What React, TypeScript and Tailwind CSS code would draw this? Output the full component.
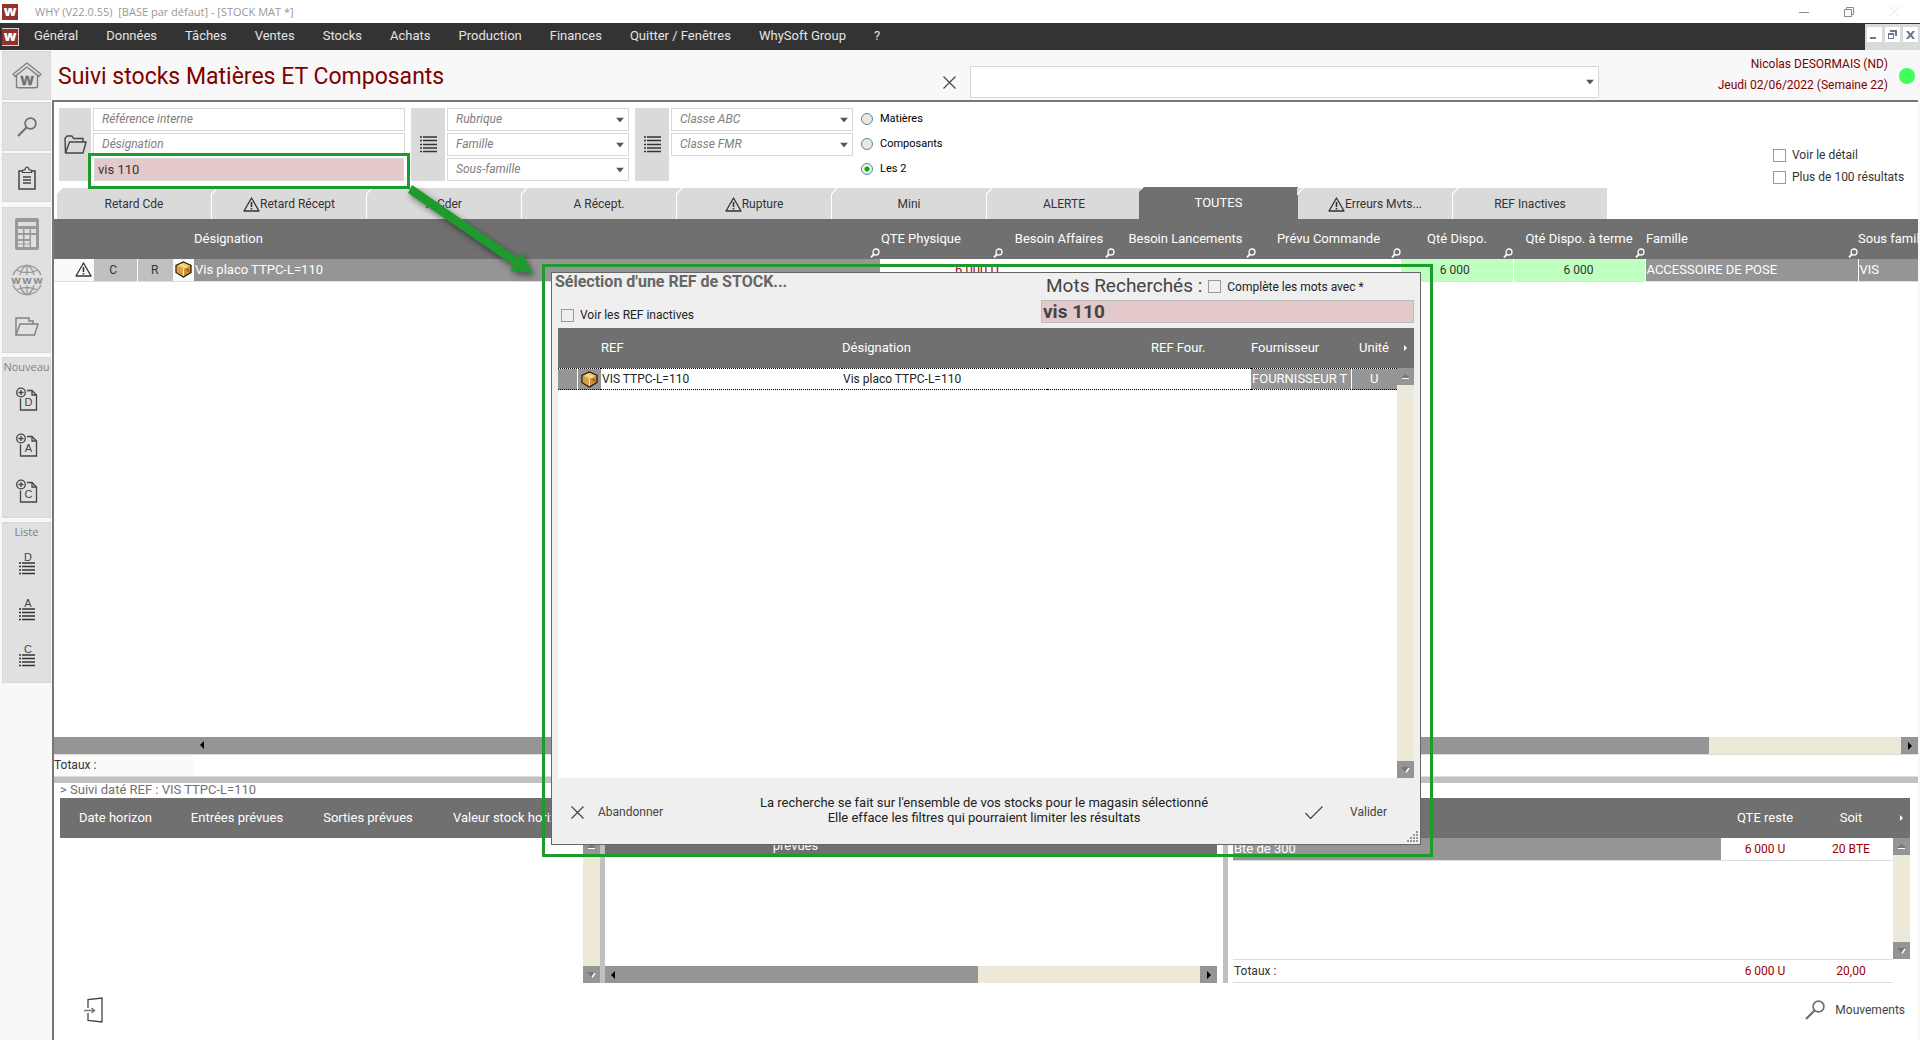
import type { ReactNode } from "react";

const menuItems = [
  "Général",
  "Données",
  "Tâches",
  "Ventes",
  "Stocks",
  "Achats",
  "Production",
  "Finances",
  "Quitter / Fenêtres",
  "WhySoft Group",
  "?"
];

const tabs = [
  { label: "Retard Cde" },
  { label: "Retard Récept", warn: true },
  { label: "A Cder" },
  { label: "A Récept." },
  { label: "Rupture", warn: true },
  { label: "Mini" },
  { label: "ALERTE" },
  { label: "TOUTES", active: true },
  { label: "Erreurs Mvts...", warn: true },
  { label: "REF Inactives" }
];

const stockColumns = [
  { label: "QTE Physique", align: "text-left" },
  { label: "Besoin Affaires", align: "text-center" },
  { label: "Besoin Lancements", align: "text-center" },
  { label: "Prévu Commande", align: "text-center" },
  { label: "Qté Dispo.", align: "text-center" },
  { label: "Qté Dispo. à terme", align: "text-center" },
  { label: "Famille", align: "text-left" }
];

function Logo() {
  return (
    <span className="flex size-4 shrink-0 items-center justify-center bg-[#96302f] pb-[2px] font-['Open_Sans',sans-serif] text-sm leading-none font-extrabold text-white">
      w
    </span>
  );
}

function WarningIcon() {
  return (
    <svg width="17" height="15" viewBox="0 0 17 15" fill="none" stroke="#333" className="shrink-0">
      <path d="M8.5 1 1 14h15z" strokeWidth="1.3" strokeLinejoin="round" />
      <path d="M8.5 5v5M8.5 11v1.6" strokeWidth="1.6" />
    </svg>
  );
}

function BoxIcon() {
  return (
    <svg width="17" height="17" viewBox="0 0 17 17" className="shrink-0">
      <path d="M8.5 1 16 4.5v7L8.5 16 1 11.5v-7z" fill="#c8923a" stroke="#1a1208" strokeWidth="1.2" />
      <path d="M8.5 1.7 15.2 4.8 8.5 8 1.8 4.8z" fill="#f3cc5c" />
      <path d="M8.5 8v7.2L1.8 11.2V4.8z" fill="#d5a048" />
      <path d="M5 3.2 11.8 6.4M8.5 8v7" stroke="#fbe9a5" />
      <path d="m11 8 2.5 1.5M13.4 8v3" stroke="#c8402a" strokeWidth="1.3" />
    </svg>
  );
}

function SearchIcon({ size = 20 }: { size?: number }) {
  return (
    <svg width={size} height={size} viewBox="0 0 20 20" fill="none" stroke="#707070">
      <circle cx="13.5" cy="6.5" r="5.4" strokeWidth="1.7" />
      <path d="M9.5 10.5 1 19" strokeWidth="2.2" />
    </svg>
  );
}

function ColumnSearchIcon() {
  return (
    <svg width="10" height="10" viewBox="0 0 10 10" fill="none" stroke="#fff" className="absolute right-0 bottom-px">
      <circle cx="6" cy="4" r="3" strokeWidth="1.3" />
      <path d="M4 6.2 1 9.4" strokeWidth="1.8" />
    </svg>
  );
}

function CrossIcon() {
  return (
    <svg width="13" height="13" viewBox="0 0 13 13" fill="none" stroke="#444" strokeWidth="1.2">
      <path d="m.5.5 12 12M12.5.5l-12 12" />
    </svg>
  );
}

function ListIcon() {
  return (
    <svg width="17" height="17" viewBox="0 0 17 17" stroke="#333" strokeWidth="1.3" fill="none">
      <path d="M0 1h2M0 4.500h2M0 8.500h2M0 12h2M0 15.500h2M3 1h14M3 4.500h14M3 8.500h14M3 12h14M3 15.500h14" />
    </svg>
  );
}

function HomeIcon() {
  return (
    <svg width="30" height="27" viewBox="0 0 30 27" fill="none" stroke="#808080" strokeWidth="1.4">
      <path d="M15 1 1 12.2l2 2.2L15 5l12 9.4 2-2.2z" strokeLinejoin="round" />
      <path d="M4.500 13.500V24q0 1.800 1.800 1.800h17.400q1.800 0 1.800-1.800V13.500" />
      <text x="15" y="22.500" textAnchor="middle" fill="#707070" stroke="#707070" strokeWidth=".3" fontSize="16" fontWeight="700" fontFamily="Open Sans">
        w
      </text>
    </svg>
  );
}

function ClipboardIcon() {
  return (
    <svg width="18" height="24" viewBox="0 0 18 24" fill="none" stroke="#444" strokeWidth="1.5">
      <path d="M4.500 5H1v18h16V5h-3.500" />
      <path d="M4.500 6.500V4.200L7 3.800q.4-2.800 2-2.800t2 2.800l2.500.4v2.300z" strokeWidth="1.200" />
      <path d="M5 11h8M5 14h8M5 17h8" strokeWidth="1.300" />
    </svg>
  );
}

function CalculatorIcon() {
  return (
    <svg width="24" height="32" viewBox="0 0 24 32">
      <rect width="24" height="32" rx="2" fill="#999" />
      <path
        d="M3 4h18v4H3zM3 11h5v4H3zM9.500 11h5v4h-5zM16 11h5v4h-5zM3 17h5v4H3zM9.500 17h5v4h-5zM16 17h5v12h-5zM3 23h5v6H3zM9.500 23h5v6h-5z"
        fill="#e0e0e0"
      />
      <path d="M3 26h11.500" stroke="#999" />
    </svg>
  );
}

function GlobeIcon() {
  return (
    <svg width="32" height="32" viewBox="0 0 32 32" fill="none" stroke="#999" strokeWidth="1.300">
      <path d="M2 11a15 15 0 0 1 28 0M2 21a15 15 0 0 0 28 0M16 1v10M16 21v10M9 11q1.500-7 7-10 5.500 3 7 10M9 21q1.500 7 7 10 5.500-3 7-10M5 6q11 5 22 0M5 26q11-5 22 0" />
      <g fill="#8c8c8c" stroke="none" fontSize="11" fontWeight="700" fontFamily="Open Sans" textAnchor="middle">
        <text x="5" y="19.500">w</text>
        <text x="16" y="19.500">w</text>
        <text x="27" y="19.500">w</text>
      </g>
    </svg>
  );
}

function SideFolderIcon() {
  return (
    <svg width="24" height="19" viewBox="0 0 24 19" fill="none" stroke="#808080" strokeWidth="1.400">
      <path d="M1 18V1h13v3h4v3" />
      <path d="M1 18 5 7h18l-3.500 11z" />
    </svg>
  );
}

function FolderIcon() {
  return (
    <svg width="23" height="19" viewBox="0 0 23 19" fill="none" stroke="#444" strokeWidth="1.400" strokeLinejoin="round">
      <path d="M1.500 18 1 3.500 3 1h5l1.500 2.500H19V7" />
      <path d="M1.500 18 5.500 7H22l-3 11z" />
    </svg>
  );
}

function NewDocIcon({ letter }: { letter: string }) {
  return (
    <svg width="22" height="24" viewBox="0 0 22 24" fill="none" stroke="#444" strokeWidth="1.300">
      <circle cx="5" cy="5.500" r="4.300" />
      <path d="M5 3v5M2.500 5.500h5" />
      <path d="M11 3.500h5l4.500 4.500v15h-16V11.500" />
      <path d="M16 3.500V8h4.500" />
      <text x="12.500" y="19" textAnchor="middle" fill="#444" stroke="none" fontSize="11" fontFamily="Liberation Sans">
        {letter}
      </text>
    </svg>
  );
}

function ListDocIcon({ letter }: { letter: string }) {
  return (
    <svg width="16" height="30" viewBox="0 -4 16 30" fill="none" stroke="#333" strokeWidth="1.300">
      <text x="9" y="8" textAnchor="middle" fill="#444" stroke="none" fontSize="11" fontFamily="Liberation Sans">
        {letter}
      </text>
      <path d="M0 10h2M0 13.500h2M0 17h2M0 20.500h2M3 10h13M3 13.500h13M3 17h13M3 20.500h13" />
    </svg>
  );
}

function SideButton({ label, children }: { label: string; children: ReactNode }) {
  return (
    <button type="button" aria-label={label} className="flex h-[46px] w-full items-center justify-center">
      {children}
    </button>
  );
}

function SideTile({ label, children }: { label: string; children: ReactNode }) {
  return (
    <button
      type="button"
      aria-label={label}
      className="flex h-[49px] w-full items-center justify-center border border-[#d8d8d8] bg-[#e0e0e0]"
    >
      {children}
    </button>
  );
}

function Sidebar() {
  return (
    <aside className="flex w-[52px] shrink-0 flex-col bg-[#f8f8f8] pt-px pr-px pl-[2px]">
      <div className="flex flex-col gap-[2px]">
        <SideTile label="Accueil"><HomeIcon /></SideTile>
        <SideTile label="Rechercher"><SearchIcon /></SideTile>
        <SideTile label="Presse-papiers"><ClipboardIcon /></SideTile>
      </div>
      <div className="mt-[5px] border border-[#d8d8d8] bg-[#e0e0e0] py-[3px]">
        <SideButton label="Calculatrice"><CalculatorIcon /></SideButton>
        <SideButton label="Internet"><GlobeIcon /></SideButton>
        <SideButton label="Dossier"><SideFolderIcon /></SideButton>
      </div>
      <div className="mt-1 border border-[#d8d8d8] bg-[#e0e0e0] pb-[3px]">
        <p className="text-center font-['Open_Sans',sans-serif] text-[11px] leading-[18px] text-[#808080]">Nouveau</p>
        {["D", "A", "C"].map((letter) => (
          <SideButton key={letter} label={`Nouveau ${letter}`}><NewDocIcon letter={letter} /></SideButton>
        ))}
      </div>
      <div className="mt-1 border border-[#d8d8d8] bg-[#e0e0e0] pb-[3px]">
        <p className="text-center font-['Open_Sans',sans-serif] text-[11px] leading-[18px] text-[#808080]">Liste</p>
        {["D", "A", "C"].map((letter) => (
          <SideButton key={letter} label={`Liste ${letter}`}><ListDocIcon letter={letter} /></SideButton>
        ))}
      </div>
    </aside>
  );
}

function Caret() {
  return (
    <svg width="8" height="5" viewBox="0 0 8 5" className="pointer-events-none absolute top-1/2 right-1 -translate-y-1/2">
      <path d="M0 0h8L4 5z" fill="#555" />
    </svg>
  );
}

function FilterSelect({ label }: { label: string }) {
  return (
    <div className="relative h-[23px] w-[182px] border border-[#d8d8d8] bg-white">
      <select aria-label={label} className="block h-full w-full appearance-none px-2 pb-px text-xs text-[#808080] italic">
        <option>{label}</option>
      </select>
      <Caret />
    </div>
  );
}

function Check({ label, dark }: { label: string; dark?: boolean }) {
  return (
    <label className={`flex items-center gap-[6px] text-xs ${dark ? "text-[#222]" : "text-[#333]"}`}>
      <input type="checkbox" className="size-[13px] appearance-none border border-[#999] checked:bg-[#707070]" />
      {label}
    </label>
  );
}

function ScrollUp() {
  return (
    <button type="button" aria-label="Monter" className="flex h-[17px] w-full shrink-0 items-center justify-center bg-[#959595]">
      <svg width="9" height="6" viewBox="0 0 9 6">
        <path d="M0 4 4.500 0 9 4z" fill="#777" />
        <path d="M1 4.500h7" stroke="#fff" />
      </svg>
    </button>
  );
}

function ScrollDown() {
  return (
    <button type="button" aria-label="Descendre" className="flex h-[17px] w-full shrink-0 items-center justify-center bg-[#959595]">
      <svg width="9" height="6" viewBox="0 0 9 6">
        <path d="M0 0h9L4.500 5z" fill="#777" />
        <path d="M8 1 5 5.200" stroke="#fff" strokeWidth="1.500" />
      </svg>
    </button>
  );
}

function VerticalBar() {
  return (
    <div className="flex w-[17px] shrink-0 flex-col bg-[#ece9d8]">
      <ScrollUp />
      <div className="flex-1" />
      <ScrollDown />
    </div>
  );
}

function ArrowLeft() {
  return (
    <svg width="4" height="8" viewBox="0 0 4 8">
      <path d="M4 0v8L0 4z" />
    </svg>
  );
}

function ArrowRight() {
  return (
    <svg width="4" height="8" viewBox="0 0 4 8">
      <path d="M0 0v8l4-4z" />
    </svg>
  );
}

function HeaderArrow() {
  return (
    <svg width="3" height="6" viewBox="0 0 3 6" className="absolute top-[17px] right-[7px] fill-white">
      <path d="M0 0v6l3-3z" />
    </svg>
  );
}

function TitleBar() {
  return (
    <div className="flex h-[23px] items-center bg-white pl-[2px]">
      <Logo />
      <p className="ml-[17px] flex-1 pt-px font-['Open_Sans',sans-serif] text-[11px] whitespace-pre text-[#999]">
        {"WHY (V22.0.55)  [BASE par défaut] - [STOCK MAT *]"}
      </p>
      <div className="flex items-center gap-[35px] pr-5">
        <button type="button" aria-label="Réduire">
          <svg width="10" height="10" viewBox="0 0 10 10" stroke="#888"><path d="M0 5.500h10" /></svg>
        </button>
        <button type="button" aria-label="Restaurer">
          <svg width="10" height="10" viewBox="0 0 10 10" fill="none" stroke="#888">
            <path d="M.5 2.500h7v7h-7zM2.500 2.500v-2h7v7h-2" />
          </svg>
        </button>
        <button type="button" aria-label="Fermer">
          <svg width="11" height="11" viewBox="0 0 11 11" stroke="#e4e4e4"><path d="m.5.5 10 10M10.500.5l-10 10" /></svg>
        </button>
      </div>
    </div>
  );
}

function MenuBar() {
  return (
    <nav className="flex h-[27px] items-center bg-[#333] pl-[2px]">
      <span className="border border-l-0 border-white/80"><Logo /></span>
      <div className="ml-[15px] flex flex-1 gap-7 pb-px">
        {menuItems.map((item) => (
          <button key={item} type="button" className="text-[13px] whitespace-nowrap text-[#e4e4e4]">
            {item}
          </button>
        ))}
      </div>
      <div className="mt-px flex h-[26px] items-start gap-[3px] bg-[#dadada] px-[2px] pt-[3px]">
        {[
          { label: "Réduire la fenêtre", path: "M1 8h6v2H1z" },
          { label: "Restaurer la fenêtre", path: "M3 1h7v6H8V3H3zM1 4h6v6H1zM2 6v3h4V6z" },
          { label: "Fermer la fenêtre", path: "M1 2h2.500l2 2.500 2-2.500H10L7 6l3 4H7.500l-2-2.500-2 2.500H1l3-4z" }
        ].map((item) => (
          <button key={item.label} type="button" aria-label={item.label} className="flex h-[15px] w-[15px] items-center justify-center bg-white">
            <svg width="11" height="11" viewBox="0 0 11 11" fill="#6a7a8a" fillRule="evenodd"><path d={item.path} /></svg>
          </button>
        ))}
      </div>
    </nav>
  );
}

function PageHeader() {
  return (
    <header className="flex h-[50px] items-center bg-[#f8f8f8]">
      <h1 className="flex-1 pt-1 pl-[6px] text-[23px] whitespace-nowrap text-[#7f0000]">Suivi stocks Matières ET Composants</h1>
      <button type="button" aria-label="Effacer" className="mt-[14px] mr-[14px]"><CrossIcon /></button>
      <div className="relative mt-[14px] h-8 w-[629px] border border-[#d8d8d8] bg-white">
        <select aria-label="Recherche" className="block h-full w-full appearance-none px-2 text-xs">
          <option></option>
        </select>
        <Caret />
      </div>
      <div className="w-[289px] text-right text-xs leading-[21px] text-[#7f0000]">
        <p>Nicolas DESORMAIS (ND)</p>
        <p>Jeudi 02/06/2022 (Semaine 22)</p>
      </div>
      <span className="mt-[2px] mr-[5px] ml-[11px] size-4 rounded-full bg-[#3fff5a]" />
    </header>
  );
}

function Filters() {
  return (
    <section className="flex h-[79px] pt-[6px] pl-[5px]">
      <div className="flex h-[73px] w-8 items-center justify-center bg-[#dadada]"><FolderIcon /></div>
      <div className="ml-[2px] flex w-[312px] flex-col gap-[2px]">
        <input
          aria-label="Référence interne"
          placeholder="Référence interne"
          className="h-[23px] border border-[#d8d8d8] px-2 pb-px text-xs placeholder:text-[#808080] placeholder:italic"
        />
        <input
          aria-label="Désignation"
          placeholder="Désignation"
          className="h-[23px] border border-[#d8d8d8] px-2 pb-px text-xs placeholder:text-[#808080] placeholder:italic"
        />
        <input
          aria-label="Mots recherchés"
          defaultValue="vis 110"
          className="mx-px h-[23px] border border-[#d8d8d8] bg-[#e3c9c9] px-[3px] pb-px text-[13px] text-[#333]"
        />
      </div>
      <div className="ml-[6px] flex h-[73px] w-[34px] items-center justify-center bg-[#dadada]"><ListIcon /></div>
      <div className="ml-[2px] flex flex-col gap-[2px]">
        <FilterSelect label="Rubrique" />
        <FilterSelect label="Famille" />
        <FilterSelect label="Sous-famille" />
      </div>
      <div className="ml-[6px] flex h-[73px] w-[34px] items-center justify-center bg-[#dadada]"><ListIcon /></div>
      <div className="ml-[2px] flex flex-col gap-[2px]">
        <FilterSelect label="Classe ABC" />
        <FilterSelect label="Classe FMR" />
      </div>
      <fieldset className="ml-2 flex flex-1 flex-col gap-[2px]">
        {["Matières", "Composants", "Les 2"].map((label) => (
          <label key={label} className="flex h-[23px] items-center gap-[7px] pb-px text-[11px] text-black">
            <input
              type="radio"
              name="nature"
              defaultChecked={label === "Les 2"}
              className="size-3 appearance-none rounded-full border border-[#4a86bd] bg-[#ece9d8] checked:bg-[radial-gradient(circle,#00b400_0_2px,#f4f3ea_3px)]"
            />
            {label}
          </label>
        ))}
      </fieldset>
      <div className="flex w-[145px] flex-col gap-[6px] pt-[39px]">
        <Check label="Voir le détail" />
        <Check label="Plus de 100 résultats" />
      </div>
    </section>
  );
}

function TabBar() {
  return (
    <div role="tablist" className="mt-[6px] ml-[3px] flex h-8 items-end">
      {tabs.map((tab, index) => (
        <button
          key={tab.label}
          type="button"
          role="tab"
          aria-selected={Boolean(tab.active)}
          className={
            tab.active
              ? "relative -ml-[3px] h-8 w-[159px] bg-[#707070] text-[13px] text-white [clip-path:polygon(5px_0,100%_0,100%_100%,0_100%,0_5px)]"
              : `relative flex h-[31px] w-[155px] items-center justify-center border-r border-white bg-[#dadada] pt-px text-xs text-[#333] ${
                  index === 0 ? "[clip-path:polygon(6px_0,100%_0,100%_100%,0_100%,0_6px)]" : ""
                }`
          }
        >
          {index > 0 && !tab.active && (
            <svg width="7" height="7" viewBox="0 0 7 7" className="absolute top-0 -left-px">
              <path d="M0 0h7v7H0z" fill="#dadada" />
              <path d="M.5 7V6L6 0" fill="none" stroke="#fff" strokeWidth="1.200" />
            </svg>
          )}
          {tab.warn && <WarningIcon />}
          {tab.label}
        </button>
      ))}
    </div>
  );
}

function StockTable() {
  return (
    <div className="min-h-[300px] flex-1">
      <table className="w-full table-fixed border-collapse text-[13px]">
        <colgroup>
          <col className="w-[19px]" />
          <col className="w-[21px]" />
          <col className="w-[43px]" />
          <col className="w-[36px]" />
          <col className="w-[21px]" />
          <col />
          <col className="w-[123px]" />
          <col className="w-[112px]" />
          <col className="w-[141px]" />
          <col className="w-[145px]" />
          <col className="w-[112px]" />
          <col className="w-[132px]" />
          <col className="w-[213px]" />
          <col className="w-[60px]" />
        </colgroup>
        <thead>
          <tr className="h-10 bg-[#707070] text-white">
            <th colSpan={5} />
            <th className="relative p-0 text-left font-normal">
              Désignation
              <ColumnSearchIcon />
            </th>
            {stockColumns.map((column) => (
              <th key={column.label} className={`relative p-0 px-px font-normal whitespace-nowrap ${column.align}`}>
                {column.label}
                <ColumnSearchIcon />
              </th>
            ))}
            <th className="overflow-hidden p-0 text-left font-normal whitespace-nowrap">Sous famille</th>
          </tr>
        </thead>
        <tbody>
          <tr className="h-[22px] border-b border-[#dedede] text-center text-[#333]">
            <td className="bg-[#fafafa] p-0" />
            <td className="bg-[#fafafa] p-0"><div className="flex justify-center"><WarningIcon /></div></td>
            <td className="border-r border-white bg-[#c0c0c0] p-0 pr-1 text-xs">C</td>
            <td className="bg-[#c0c0c0] p-0 pr-px text-xs">R</td>
            <td className="bg-[#fafafa] p-0"><div className="flex justify-center"><BoxIcon /></div></td>
            <td className="bg-[#959595] p-0 pl-px text-left text-white">Vis placo TTPC-L=110</td>
            <td className="p-0 pr-1 text-right text-[#b00020]">6 000 U</td>
            <td />
            <td />
            <td />
            <td className="border-r border-white bg-[#bfffbf] p-0 pr-1 text-xs">6 000</td>
            <td className="border-r border-white bg-[#bfffbf] p-0 pr-px text-xs">6 000</td>
            <td className="border-r border-white bg-[#959595] p-0 pl-px text-left whitespace-nowrap text-white">ACCESSOIRE DE POSE</td>
            <td className="bg-[#959595] p-0 pl-px text-left text-white">VIS</td>
          </tr>
        </tbody>
      </table>
    </div>
  );
}

function StockFooter() {
  return (
    <div>
      <div className="flex h-[17px] bg-[#ece9d8]">
        <div className="flex flex-1 items-center bg-[#959595] pb-px pl-[146px]"><ArrowLeft /></div>
        <div className="w-[192px]" />
        <button type="button" aria-label="Défiler à droite" className="flex w-[17px] items-center justify-center bg-[#959595]">
          <ArrowRight />
        </button>
      </div>
      <div className="flex h-[23px] border-y border-[#dedede] text-xs text-[#333]">
        <p className="w-[139px] bg-[#fafafa] leading-[21px]">Totaux :</p>
      </div>
      <div className="h-[6px] bg-[#c0c0c0]" />
    </div>
  );
}

function SchedulePanel() {
  return (
    <div className="flex min-w-0 flex-col">
      <div className="overflow-hidden bg-[#707070]">
        <table className="w-full table-fixed text-[13px] text-white">
          <thead>
            <tr className="h-10">
              <th className="w-[111px] p-0 font-normal">Date horizon</th>
              <th className="w-[132px] p-0 font-normal">Entrées prévues</th>
              <th className="w-[130px] p-0 font-normal">Sorties prévues</th>
              <th className="p-0 pl-5 text-left font-normal whitespace-nowrap">Valeur stock horizon</th>
            </tr>
          </thead>
        </table>
      </div>
      <div className="flex flex-1 justify-end"><VerticalBar /></div>
    </div>
  );
}

function OrdersPanel() {
  return (
    <div className="flex min-w-0 flex-col">
      <table className="w-full table-fixed bg-[#707070] text-[13px] text-white">
        <thead>
          <tr className="h-[59px]">
            <th className="w-[127px]" />
            <th className="w-[127px] p-0 pt-4 font-normal">Entrées<br />prévues</th>
            <th />
          </tr>
        </thead>
      </table>
      <div className="flex-1" />
      <div className="flex h-[17px] bg-[#ece9d8]">
        <div className="flex w-[61%] items-center bg-[#959595] pl-[6px]"><ArrowLeft /></div>
        <div className="flex-1" />
        <button type="button" aria-label="Défiler à droite" className="flex w-[17px] items-center justify-center bg-[#959595]">
          <ArrowRight />
        </button>
      </div>
    </div>
  );
}

function PackagingPanel() {
  return (
    <div className="flex min-w-0 flex-col text-xs">
      <div className="relative h-10 bg-[#707070] text-[13px] text-white">
        <div className="flex h-full items-center pr-[17px]">
          <span className="flex-1" />
          <span className="w-[88px] text-center">QTE reste</span>
          <span className="w-[84px] text-center">Soit</span>
        </div>
        <HeaderArrow />
      </div>
      <div className="flex h-[121px]">
        <table className="h-fit flex-1 table-fixed">
          <tbody>
            <tr className="h-[22px] border-b border-[#dedede] text-center text-[#990000]">
              <td className="bg-[#959595] p-0 pl-px text-left text-[13px] text-white">Bte de 300</td>
              <td className="w-[88px] p-0">6 000 U</td>
              <td className="w-[84px] p-0">20 BTE</td>
            </tr>
          </tbody>
        </table>
        <VerticalBar />
      </div>
      <div className="mr-[17px] flex h-6 items-center border-y border-[#dedede] text-center text-[#990000]">
        <span className="flex-1 pl-px text-left text-[#333]">Totaux :</span>
        <span className="w-[88px]">6 000 U</span>
        <span className="w-[84px]">20,00</span>
      </div>
    </div>
  );
}

function DetailPanels() {
  return (
    <section className="pr-2 pl-[6px]">
      <h2 className="h-[15px] text-[13px] leading-[14px] text-[#707070]">&gt; Suivi daté REF : VIS TTPC-L=110</h2>
      <div className="grid h-[185px] grid-cols-[540fr_5px_612fr_5px_688fr]">
        <SchedulePanel />
        <div className="mt-10 bg-[#c0c0c0]" />
        <OrdersPanel />
        <div className="mr-[-6px] ml-[6px] bg-[#c0c0c0]" />
        <div className="min-w-0 pl-[11px]"><PackagingPanel /></div>
      </div>
    </section>
  );
}

function PageFooter() {
  return (
    <footer className="flex h-[57px] items-center justify-between pr-[13px] pb-1 pl-[30px]">
      <button type="button" aria-label="Quitter">
        <svg width="19" height="26" viewBox="0 0 19 26" fill="none" stroke="#444" strokeWidth="1.300">
          <path d="M4 11V2.500L18 1v24L4 23.500V16" />
          <path d="M0 13.500h10M7.500 11l3 2.500-3 2.500" stroke="#777" strokeWidth="1.500" />
        </svg>
      </button>
      <button type="button" className="flex items-center gap-[10px] text-xs text-[#444]">
        <SearchIcon />
        Mouvements
      </button>
    </footer>
  );
}

function SelectionDialog() {
  return (
    <div
      role="dialog"
      aria-label="Sélection d'une REF de STOCK"
      className="absolute top-[272px] left-[551px] flex h-[573px] w-[870px] flex-col border border-[#666] bg-[#efefef] px-[6px]"
    >
      <div className="flex h-[55px] justify-between">
        <div>
          <h2 className="-ml-[3px] text-base leading-[18px] font-bold text-[#666]">Sélection d'une REF de STOCK...</h2>
          <div className="mt-4 pl-[3px]"><Check label="Voir les REF inactives" dark /></div>
        </div>
        <div className="w-[373px]">
          <div className="flex h-[27px] items-center gap-[6px] pl-[5px]">
            <label htmlFor="words" className="text-[19px] text-[#444]">Mots Recherchés :</label>
            <Check label="Complète les mots avec *" dark />
          </div>
          <input
            id="words"
            defaultValue="vis 110"
            className="block h-[23px] w-full border border-[#bbb] bg-[#e3c9c9] px-px text-[19px] leading-5 font-bold text-[#444]"
          />
        </div>
      </div>
      <div className="flex h-[450px] flex-col bg-white">
        <div className="relative bg-[#707070] pr-[17px]">
          <table className="w-full table-fixed text-[13px] text-white">
            <thead>
              <tr className="h-10">
                <th className="w-[43px]" />
                <th className="w-[241px] p-0 text-left font-normal">REF</th>
                <th className="p-0 text-left font-normal">Désignation</th>
                <th className="w-[100px] p-0 text-left font-normal">REF Four.</th>
                <th className="w-[100px] p-0 text-left font-normal">Fournisseur</th>
                <th className="w-[46px] p-0 font-normal">Unité</th>
              </tr>
            </thead>
          </table>
          <HeaderArrow />
        </div>
        <div className="flex flex-1">
          <div className="flex-1">
            <table className="w-full table-fixed text-xs text-[#222]">
              <tbody>
                <tr className="h-[21px] border-y border-dotted border-black">
                  <td className="w-[19px] border-r border-white bg-[#959595] p-0" />
                  <td className="w-[24px] bg-[#959595] p-0"><div className="flex justify-center"><BoxIcon /></div></td>
                  <td className="w-[241px] p-0 pl-px">VIS TTPC-L=110</td>
                  <td colSpan={2} className="p-0 pl-px">Vis placo TTPC-L=110</td>
                  <td className="w-[100px] overflow-hidden border-r border-white bg-[#959595] p-0 pl-px text-[13px] whitespace-nowrap text-white">
                    FOURNISSEUR T
                  </td>
                  <td className="w-[46px] bg-[#959595] p-0 text-center text-[13px] text-white">U</td>
                </tr>
              </tbody>
            </table>
          </div>
          <VerticalBar />
        </div>
      </div>
      <div className="flex flex-1 items-center pt-[2px]">
        <button type="button" className="flex items-center gap-[14px] pl-[13px] text-xs text-[#444]">
          <CrossIcon />
          Abandonner
        </button>
        <p className="flex-1 pb-1 text-center text-[13px] leading-[15px] text-[#222]">
          La recherche se fait sur l'ensemble de vos stocks pour le magasin sélectionné
          <br />
          Elle efface les filtres qui pourraient limiter les résultats
        </p>
        <button type="button" className="flex items-center gap-[27px] pr-[27px] text-xs text-[#444]">
          <svg width="18" height="13" viewBox="0 0 18 13" fill="none" stroke="#444" strokeWidth="1.200">
            <path d="m.5 7 5 5.500L17.500.5" />
          </svg>
          Valider
        </button>
      </div>
      <svg width="12" height="12" viewBox="0 0 12 12" fill="#999" className="absolute right-px bottom-px">
        <path d="M9 0h2v2H9zM6 3h2v2H6zM9 3h2v2H9zM3 6h2v2H3zM6 6h2v2H6zM9 6h2v2H9zM0 9h2v2H0zM3 9h2v2H3zM6 9h2v2H6zM9 9h2v2H9z" />
      </svg>
    </div>
  );
}

function Callouts() {
  return (
    <>
      <div className="pointer-events-none absolute top-[153px] left-[88px] h-9 w-[322px] border-[3px] border-[#1d9c2d]" />
      <div className="pointer-events-none absolute top-[264px] left-[542px] h-[593px] w-[891px] border-[3px] border-[#1d9c2d]" />
      <svg
        width="150"
        height="110"
        viewBox="0 0 150 110"
        fill="#1d9c2d"
        className="pointer-events-none absolute top-[180px] left-[400px] drop-shadow-[2px_3px_3px_rgba(0,0,0,0.5)]"
      >
        <path d="m12 5 106 73 4-5 11 20-23-2 4-5L8 13z" />
      </svg>
    </>
  );
}

export default function App() {
  return (
    <div className="relative flex min-h-screen flex-col overflow-hidden bg-white font-[Roboto,sans-serif] text-[#333]">
      <TitleBar />
      <MenuBar />
      <div className="flex flex-1 bg-[#f8f8f8]">
        <Sidebar />
        <div className="flex min-w-0 flex-1 flex-col">
          <PageHeader />
          <main className="mr-[2px] flex flex-1 flex-col border-t-2 border-l-2 border-[#777] bg-white">
            <Filters />
            <TabBar />
            <StockTable />
            <StockFooter />
            <DetailPanels />
            <PageFooter />
          </main>
        </div>
      </div>
      <SelectionDialog />
      <Callouts />
    </div>
  );
}
